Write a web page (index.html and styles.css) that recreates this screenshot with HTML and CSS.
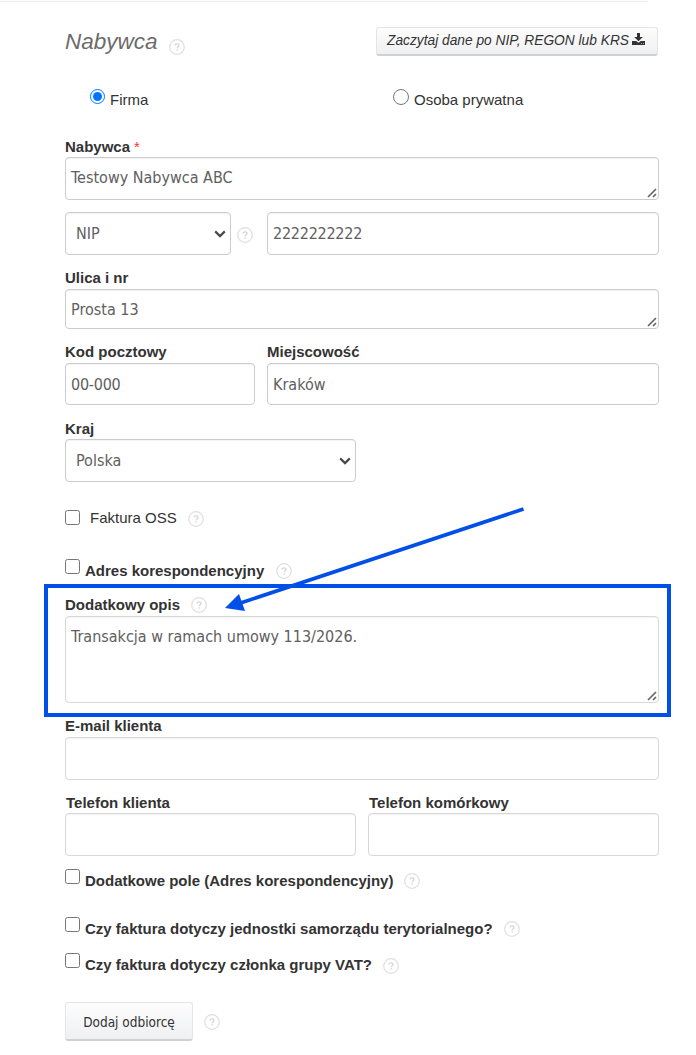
FILE: index.html
```html
<!DOCTYPE html>
<html lang="pl">
<head>
    <meta charset="UTF-8">
    <meta name="viewport" content="width=device-width, initial-scale=1.0">
    <title>Nabywca</title>
    <link rel="stylesheet" href="styles.css">
</head>
<body>
    <svg class="symbols" width="0" height="0">
        <symbol id="help" viewBox="0 0 16 16">
            <circle cx="8" cy="8" r="7.3" fill="none" stroke="#dfdfdf" stroke-width="1.2"/>
            <path d="M6 6.6C6 5.4 6.9 4.8 8 4.8s2 .7 2 1.7c0 1.3-1.8 1.3-1.8 2.8" fill="none" stroke="#d6d6d6" stroke-width="1.3"/>
            <rect x="7.5" y="10.2" width="1.4" height="1.4" fill="#d6d6d6"/>
        </symbol>
        <symbol id="grip" viewBox="0 0 10 10">
            <path d="M1 9L9 1M6 9L9 6" fill="none" stroke="#666" stroke-width="1.7"/>
        </symbol>
        <symbol id="chevron" viewBox="0 0 12 8">
            <path d="M1.2 1.4L6 6.1l4.8-4.7" fill="none" stroke="#4a4a4a" stroke-width="2.2"/>
        </symbol>
    </svg>

    <hr class="top-line">
    <form class="buyer-form">
        <div class="header">
            <h2 class="title">Nabywca</h2>
            <svg class="help help-title"><use href="#help"/></svg>
            <button type="button" class="button button-load">
                Zaczytaj dane po NIP, REGON lub KRS
                <svg class="download" viewBox="0 0 13 12">
                    <path d="M5 0h3v4h2.8L6.5 8.3 2.2 4H5z" fill="#333"/>
                    <path d="M0 8h4.2l2.3 1.8L8.800 8H13v4H0z" fill="#333"/>
                    <path d="M9 10.5h1M11 10.5h1" stroke="#fff" stroke-width=".6"/>
                </svg>
            </button>
        </div>

        <div class="types">
            <label class="type"><input type="radio" name="type" checked><span>Firma</span></label>
            <label class="type"><input type="radio" name="type"><span>Osoba prywatna</span></label>
        </div>

        <div class="field field-name">
            <label class="label">Nabywca <span class="required">*</span></label>
            <div class="area area-name">
                <textarea class="control">Testowy Nabywca ABC</textarea>
                <svg class="grip"><use href="#grip"/></svg>
            </div>
        </div>

        <div class="row row-nip">
            <div class="select select-nip">
                <select class="control"><option>NIP</option></select>
                <svg class="chevron"><use href="#chevron"/></svg>
            </div>
            <svg class="help help-nip"><use href="#help"/></svg>
            <input type="text" class="control number nip" value="2222222222">
        </div>

        <div class="field field-street">
            <label class="label">Ulica i nr</label>
            <div class="area area-street">
                <textarea class="control">Prosta 13</textarea>
                <svg class="grip"><use href="#grip"/></svg>
            </div>
        </div>

        <div class="row row-city">
            <div class="field code">
                <label class="label">Kod pocztowy</label>
                <input type="text" class="control number" value="00-000">
            </div>
            <div class="field city">
                <label class="label">Miejscowość</label>
                <input type="text" class="control" value="Kraków">
            </div>
        </div>

        <div class="field field-country">
            <label class="label">Kraj</label>
            <div class="select">
                <select class="control"><option>Polska</option></select>
                <svg class="chevron"><use href="#chevron"/></svg>
            </div>
        </div>

        <div class="check check-oss">
            <input type="checkbox"><span>Faktura OSS</span>
            <svg class="help"><use href="#help"/></svg>
        </div>
        <div class="check check-address">
            <input type="checkbox"><span>Adres korespondencyjny</span>
            <svg class="help"><use href="#help"/></svg>
        </div>

        <div class="field field-description">
            <label class="label">Dodatkowy opis <svg class="help"><use href="#help"/></svg></label>
            <div class="area area-description">
                <textarea class="control light">Transakcja w ramach umowy 113/2026.</textarea>
                <svg class="grip"><use href="#grip"/></svg>
            </div>
            <div class="highlight"></div>
            <svg class="arrow" viewBox="0 0 300 105">
                <path d="M298.500 2L14 96.500" stroke="#0050e8" stroke-width="3.6"/>
                <path d="M0 101L14 87l6 17z" fill="#0050e8"/>
            </svg>
        </div>

        <div class="field field-email">
            <label class="label">E-mail klienta</label>
            <input type="text" class="control light">
        </div>

        <div class="row row-phones">
            <div class="field phone">
                <label class="label">Telefon klienta</label>
                <input type="text" class="control light">
            </div>
            <div class="field phone">
                <label class="label">Telefon komórkowy</label>
                <input type="text" class="control light">
            </div>
        </div>

        <div class="check check-extra">
            <input type="checkbox"><span>Dodatkowe pole (Adres korespondencyjny)</span>
            <svg class="help"><use href="#help"/></svg>
        </div>
        <div class="check check-local">
            <input type="checkbox"><span>Czy faktura dotyczy jednostki samorządu terytorialnego?</span>
            <svg class="help"><use href="#help"/></svg>
        </div>
        <div class="check check-vat">
            <input type="checkbox"><span>Czy faktura dotyczy członka grupy VAT?</span>
            <svg class="help"><use href="#help"/></svg>
        </div>

        <div class="footer">
            <button type="button" class="button button-add">Dodaj odbiorcę</button>
            <svg class="help"><use href="#help"/></svg>
        </div>
    </form>
</body>
</html>
```
FILE: styles.css
```css
* {
    margin: 0;
    padding: 0;
    box-sizing: border-box;
}

body {
    height: 1055px;
    overflow: hidden;
    background-color: #fff;
    color: #333;
    font-family: "Liberation Sans", Arial, sans-serif;
    font-size: 15px;
    line-height: 20px;
}

.symbols {
    display: none;
}

.top-line {
    width: 648px;
    height: 1px;
    margin-top: 1px;
    border: none;
    background-color: #ebebeb;
}

.buyer-form {
    width: 594px;
    margin-left: 65px;
    padding-top: 25px;
}

.header {
    display: flex;
    height: 29px;
}

.title {
    font-size: 22.5px;
    font-weight: normal;
    font-style: italic;
    line-height: 30px;
    color: #6b6b6b;
}

.help {
    flex: none;
    width: 16px;
    height: 16px;
}

.help-title {
    margin: 12px 0 0 11px;
}

.button {
    border: 1px solid #e3e5e7;
    border-bottom: 2px solid #cfd1d3;
    border-radius: 3px;
    background: linear-gradient(#fdfdfd, #eff0f2);
    color: #333;
}

.button-load {
    display: flex;
    width: 282px;
    margin: 0 1px 0 auto;
    padding: 3px 0 0 10px;
    font: italic 13.75px/19px "Liberation Sans", Arial, sans-serif;
    white-space: nowrap;
}

.download {
    width: 13px;
    height: 12px;
    margin: 2px 0 0 3px;
}

.types {
    display: flex;
    margin-top: 33px;
    padding-left: 25px;
}

.type {
    display: flex;
    flex: none;
    width: 303px;
}

.type input {
    width: 15px;
    height: 15px;
    margin-right: 5px;
}

.type span {
    padding-top: 1px;
}

.type + .type input {
    width: 16px;
    height: 16px;
}

.label {
    display: flex;
    height: 21px;
    font-weight: bold;
}

.required {
    margin-left: 4px;
    color: #f33;
    font-weight: normal;
}

.control {
    display: block;
    width: 100%;
    height: 43px;
    padding: 0 5px;
    border: 1px solid #ccc;
    border-radius: 4px;
    outline: none;
    background-color: #fff;
    box-shadow: inset 0 1px 1px rgba(0, 0, 0, 0.05);
    color: #606060;
    font: 16px/20px "DejaVu Sans Condensed", Tahoma, sans-serif;
    resize: none;
    appearance: none;
}

.number {
    letter-spacing: -0.25px;
}

.light {
    border-color: #d8d8d8;
}

textarea.control {
    height: 100%;
    padding-top: 10px;
    overflow: hidden;
}

.area,
.select {
    position: relative;
}

.grip {
    position: absolute;
    right: 2px;
    bottom: 2px;
    width: 10px;
    height: 10px;
}

.select .control {
    padding-left: 10px;
}

.chevron {
    position: absolute;
    top: 18px;
    right: 5px;
    width: 12px;
    height: 8px;
}

.row {
    display: flex;
    gap: 12px;
}

.field-name {
    margin-top: 27px;
}

.field-name .label {
    height: 20px;
}

.area-name {
    height: 43px;
}

.row-nip {
    gap: 0;
    margin-top: 12px;
}

.select-nip {
    width: 166px;
}

.help-nip {
    margin: 15px 14px 0 6px;
}

.nip {
    flex: 1;
}

.field-street {
    margin-top: 13px;
}

.area-street {
    height: 40px;
}

.row-city {
    margin-top: 13px;
}

.row-city .control {
    height: 42px;
}

.code {
    width: 190px;
}

.city {
    flex: 1;
}

.field-country {
    width: 291px;
    margin-top: 14px;
}

.field-country .label {
    height: 20px;
}

.check {
    display: flex;
    height: 20px;
    font-weight: bold;
}

.check input {
    flex: none;
    width: 15px;
    height: 15px;
    margin-right: 5px;
}

.check span {
    padding-top: 2px;
}

.check .help {
    margin: 4px 0 0 11px;
}

.check-oss {
    margin-top: 28px;
    font-weight: normal;
}

.check-oss span {
    margin-left: 5px;
    padding-top: 0;
    line-height: 15px;
}

.check-oss .help {
    margin-top: 1px;
}

.check-address {
    margin-top: 29px;
}

.check-address .help {
    margin-left: 12px;
}

.field-description {
    position: relative;
    margin-top: 16px;
}

.field-description .help {
    margin: 2px 0 0 11px;
}

.area-description {
    height: 87px;
}

/* marked area around the additional description */
.highlight {
    position: absolute;
    top: -11px;
    left: -21px;
    width: 627px;
    height: 133px;
    border: 4px solid #0050e8;
}

.arrow {
    position: absolute;
    top: -88px;
    left: 160px;
    width: 300px;
    height: 105px;
}

.field-email {
    margin-top: 13px;
}

.row-phones {
    margin-top: 13px;
}

.row-phones .label {
    height: 20px;
    padding-left: 1px;
}

.phone {
    flex: 1;
}

.check-extra {
    margin-top: 13px;
}

.check-local {
    margin-top: 28px;
}

.check-vat {
    margin-top: 16px;
}

.check-vat .help {
    margin-top: 5px;
}

.footer {
    display: flex;
    margin-top: 29px;
}

.button-add {
    width: 128px;
    height: 39px;
    padding-top: 2px;
    font: 13.5px/20px "DejaVu Sans Condensed", Tahoma, sans-serif;
}

.footer .help {
    margin: 12px 0 0 11px;
}
```
